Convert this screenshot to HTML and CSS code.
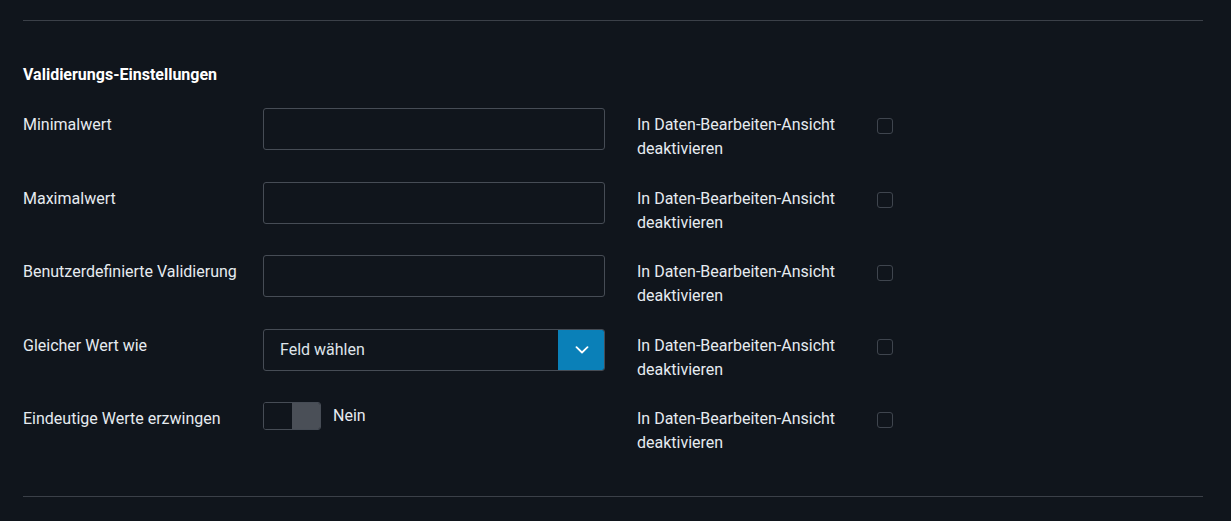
FILE: index.html
```html
<!DOCTYPE html>
<html lang="de">
<head>
  <meta charset="UTF-8" />
  <title>Validierungs-Einstellungen</title>
  <link rel="stylesheet" href="styles.css">
</head>
<body>
  <div class="panel">
    <hr class="divider">

    <h3 class="section-title">Validierungs-Einstellungen</h3>

    <div class="rows">
      <!-- Minimalwert -->
      <div class="row">
        <label class="row-label">Minimalwert</label>
        <div class="row-control"><input class="text-input" type="text"></div>
        <label class="side-label">In Daten-Bearbeiten-Ansicht deaktivieren</label>
        <span class="checkbox"></span>
      </div>

      <!-- Maximalwert -->
      <div class="row">
        <label class="row-label">Maximalwert</label>
        <div class="row-control"><input class="text-input" type="text"></div>
        <label class="side-label">In Daten-Bearbeiten-Ansicht deaktivieren</label>
        <span class="checkbox"></span>
      </div>

      <!-- Custom validation -->
      <div class="row">
        <label class="row-label">Benutzerdefinierte Validierung</label>
        <div class="row-control"><input class="text-input" type="text"></div>
        <label class="side-label">In Daten-Bearbeiten-Ansicht deaktivieren</label>
        <span class="checkbox"></span>
      </div>

      <!-- Same value as -->
      <div class="row">
        <label class="row-label">Gleicher Wert wie</label>
        <div class="row-control">
          <div class="select">
            <span class="select-value">Feld wählen</span>
            <span class="select-btn">
              <svg viewBox="0 0 14 8" width="14" height="8">
                <path d="M1.5 1.2 L7 6.5 L12.5 1.2" fill="none" stroke="#fff" stroke-width="1.8" stroke-linecap="round" stroke-linejoin="round"/>
              </svg>
            </span>
          </div>
        </div>
        <label class="side-label">In Daten-Bearbeiten-Ansicht deaktivieren</label>
        <span class="checkbox"></span>
      </div>

      <!-- Unique values -->
      <div class="row">
        <label class="row-label">Eindeutige Werte erzwingen</label>
        <div class="row-control toggle-wrap">
          <span class="toggle"><span class="toggle-off"></span><span class="toggle-knob"></span></span>
          <span class="toggle-text">Nein</span>
        </div>
        <label class="side-label">In Daten-Bearbeiten-Ansicht deaktivieren</label>
        <span class="checkbox"></span>
      </div>
    </div>

    <hr class="divider bottom">
  </div>
</body>
</html>
```

FILE: styles.css
```css
* {
  margin: 0;
  padding: 0;
  box-sizing: border-box;
}
body {
  font-family: Roboto, "Liberation Sans", sans-serif;
  background: #10151c;
  color: #e6ebf0;
  font-size: 16px;
  line-height: 24px;
}
.panel {
  padding: 20px 28px 0 23px;
}
.divider {
  border: 0;
  border-top: 1px solid #3b4048;
  height: 0;
}
.divider.bottom {
  margin-top: 41px;
}

/* section heading */
.section-title {
  font-size: 16px;
  font-weight: 700;
  color: #fff;
  line-height: 20px;
  margin: 44px 0 23px;
}

.rows {
  display: flex;
  flex-direction: column;
  gap: 20.5px;
}
.row {
  display: grid;
  grid-template-columns: 240px 374px 240px 16px;
  align-items: start;
}
.row-label {
  padding-top: 5px;
}
.row-control {
  width: 342px;
}
.side-label {
  padding-top: 5px;
}
.checkbox {
  display: block;
  width: 16px;
  height: 16px;
  margin-top: 10px;
  border: 1px solid #3f454e;
  border-radius: 3px;
}

/* inputs */
.text-input {
  display: block;
  width: 342px;
  height: 42px;
  background: transparent;
  border: 1px solid #464c55;
  border-radius: 3px;
  color: #e6ebf0;
  font: inherit;
  padding: 0 16px;
}
.select {
  display: flex;
  width: 342px;
  height: 42px;
  border: 1px solid #464c55;
  border-radius: 3px;
  overflow: hidden;
}
.select-value {
  flex: 1;
  padding: 8px 16px 0;
  color: #dfe4ea;
}
.select-btn {
  width: 47px;
  margin: -1px -1px -1px 0;
  background: #0a80b8;
  display: flex;
  align-items: center;
  justify-content: center;
  border-radius: 0 3px 3px 0;
}

/* toggle */
.toggle-wrap {
  display: flex;
  align-items: flex-start;
  gap: 12px;
}
.toggle {
  display: flex;
  width: 58px;
  height: 28px;
  border: 1px solid #464c55;
  border-radius: 3px;
  overflow: hidden;
}
.toggle-off {
  width: 28px;
  background: #10151c;
}
.toggle-knob {
  flex: 1;
  background: #4a4f57;
}
.toggle-text {
  line-height: 28px;
}
```
